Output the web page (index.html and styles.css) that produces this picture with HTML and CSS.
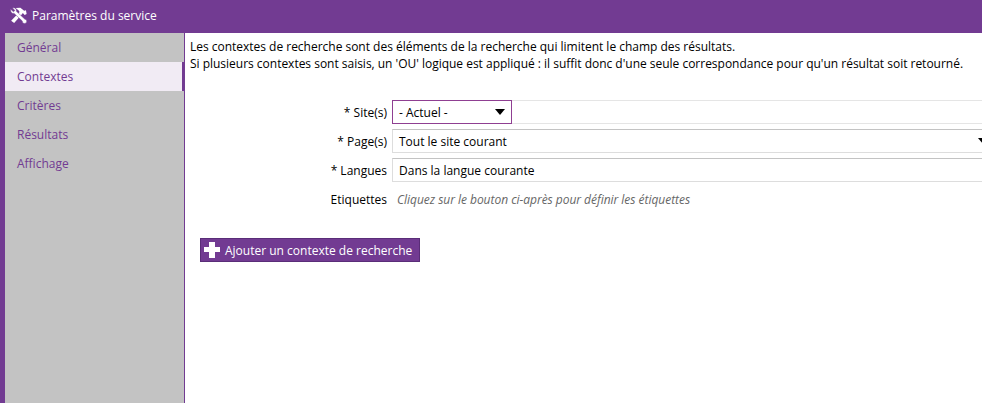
FILE: index.html
```html
<!DOCTYPE html>
<html lang="fr">
<head>
  <meta charset="UTF-8">
  <title>Paramètres du service</title>
  <link rel="stylesheet" href="styles.css">
</head>
<body>
  <div class="header">
    <svg class="header-icon" width="17" height="17" viewBox="0 0 18 18">
      <!-- hammer -->
      <path d="M6 1 L11 .8 L15 4 L16.9 3.4 L17.6 7.4 L15.5 8.4 L13.6 6.4 L12.8 7.4 L4.4 17 L1.2 14.6 L10.2 5.2 L9.2 3.8 Z" fill="#fff"/>
      <!-- wrench -->
      <path d="M.8 2.4 L3.6 5 L5.2 3.6 L2.6 1 C5 0 7.2 2 6.8 4.6 L15.8 13 C18 13 18.4 16 16.4 17.2 C14.6 18 12.8 16.8 13 14.8 L4.4 6.8 C2 7.4 0 5 .8 2.4 Z" fill="#fff" stroke="#723b92" stroke-width="0.5"/>
    </svg>
    <span>Paramètres du service</span>
  </div>
  <div class="main">
    <ul class="sidebar">
      <li>Général</li>
      <li class="active">Contextes</li>
      <li>Critères</li>
      <li>Résultats</li>
      <li>Affichage</li>
    </ul>
    <div class="content">
      <p class="intro">Les contextes de recherche sont des éléments de la recherche qui limitent le champ des résultats.<br>Si plusieurs contextes sont saisis, un 'OU' logique est appliqué : il suffit donc d'une seule correspondance pour qu'un résultat soit retourné.</p>
      <div class="form">
        <div class="row">
          <label>* Site(s)</label>
          <div class="field">
            <div class="select select-focus">- Actuel -<span class="arrow"></span></div>
          </div>
        </div>
        <div class="row">
          <label>* Page(s)</label>
          <div class="field field-strong">Tout le site courant<span class="arrow"></span></div>
        </div>
        <div class="row">
          <label>* Langues</label>
          <div class="field field-strong">Dans la langue courante</div>
        </div>
        <div class="row">
          <label>Etiquettes</label>
          <div class="hint">Cliquez sur le bouton ci-après pour définir les étiquettes</div>
        </div>
      </div>
      <button class="btn">
        <svg width="16" height="16" viewBox="0 0 16 16"><path d="M5 0 H11 V5 H16 V10 H11 V16 H5 V10 H0 V5 H5 Z" fill="#fff"/></svg>
        Ajouter un contexte de recherche
      </button>
    </div>
  </div>
</body>
</html>
```

FILE: styles.css
```css
html, body {
  margin: 0;
  height: 100%;
  overflow: hidden;
}
body {
  font-family: 'Open Sans', 'Noto Sans', sans-serif;
  font-size: 12px;
  color: #000;
  background-color: #fff;
  display: flex;
  flex-direction: column;
}
.header {
  height: 33px;
  flex: none;
  background-color: #723b92;
  color: #fff;
  display: flex;
  align-items: center;
  gap: 5px;
  padding-left: 10px;
  padding-bottom: 2px;
  box-sizing: border-box;
}
.main {
  flex: 1;
  display: flex;
  min-height: 0;
}
.sidebar {
  list-style: none;
  margin: 0;
  padding: 0;
  width: 179px;
  flex: none;
  background-color: #c3c3c3;
  border-left: 5px solid #723b92;
  border-right: 1px solid #723b92;
}
.sidebar li {
  height: 29px;
  line-height: 29px;
  padding-left: 12px;
  color: #723b92;
}
.sidebar li.active {
  background-color: #f1ebf4;
  border-right: 2px solid #723b92;
}
.content {
  flex: 1;
  min-width: 0;
  padding: 5px 0 0 5px;
}
.intro {
  margin: 0;
  line-height: 17px;
  letter-spacing: -0.015px;
}
.form {
  margin-top: 28px;
  display: flex;
  flex-direction: column;
  gap: 5px;
}
.row {
  display: flex;
  height: 24px;
  align-items: stretch;
}
.row label {
  width: 197px;
  flex: none;
  text-align: right;
  line-height: 25px;
}
.field {
  flex: 1;
  margin-left: 5px;
  position: relative;
  box-sizing: border-box;
  border-top: 1px solid #e5e5e5;
  border-bottom: 1px solid #e5e5e5;
  border-left: 1px solid #e5e5e5;
  line-height: 24px;
}
.field-strong {
  border-top-color: #c3c3c3;
  border-bottom-color: #dddddd;
  border-left-color: #dddddd;
  padding-left: 6px;
}
.select {
  width: 120px;
  height: 24px;
  margin: -1px 0 0 -1px;
  box-sizing: border-box;
  border: 1px solid #8f3f92;
  background-color: #fff;
  padding-left: 6px;
  position: relative;
}
.arrow {
  position: absolute;
  right: 6px;
  top: 8px;
  width: 0;
  height: 0;
  border-left: 5px solid transparent;
  border-right: 5px solid transparent;
  border-top: 6px solid #000;
}
.field-strong .arrow {
  right: -6px;
}
.hint {
  margin-left: 10px;
  font-style: italic;
  color: #666;
  line-height: 25px;
  letter-spacing: -0.03px;
}
.btn {
  margin: 27px 0 0 10px;
  display: flex;
  align-items: center;
  gap: 5px;
  width: 220px;
  height: 24px;
  padding: 0 0 0 3px;
  box-sizing: border-box;
  background-color: #723b92;
  border: 1px solid #5a2d78;
  color: #fff;
  font-family: inherit;
  font-size: 12px;
  white-space: nowrap;
}
```
